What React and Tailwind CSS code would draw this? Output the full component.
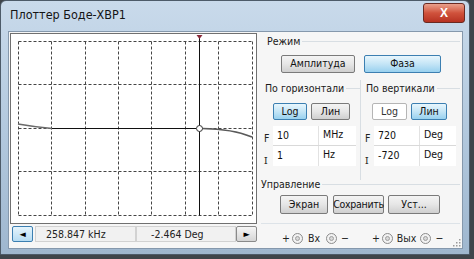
const font = { fontFamily: '"Liberation Sans Narrow", "DejaVu Sans Condensed", "Liberation Sans", sans-serif' };

const GridPlot = () => {
  const xs = [7.5, 40.5, 74.5, 107.5, 140.5, 174.5, 207.5, 241.5];
  const ys = [7.5, 50.5, 94.5, 137.5, 181.5];
  return (
    <svg width="245" height="189" viewBox="0 0 245 189">
      {xs.map((x) => (
        <line key={"x" + x} x1={x} y1="7.5" x2={x} y2="181.5" stroke="#444" strokeWidth="1" strokeDasharray="3 2" />
      ))}
      {ys.map((y) => (
        <line key={"y" + y} x1="7.5" y1={y} x2="241.5" y2={y} stroke="#444" strokeWidth="1" strokeDasharray="3 2" />
      ))}
      <path d="M7 90 Q24 93 41 94.5" fill="none" stroke="#6a6a6a" strokeWidth="1.6" />
      <line x1="41" y1="94.5" x2="185" y2="94.5" stroke="#111" strokeWidth="1" />
      <path d="M191 94.5 Q222 95 241 103" fill="none" stroke="#5a5a5a" strokeWidth="1.6" />
      <line x1="188.5" y1="3" x2="188.5" y2="181.5" stroke="#111" strokeWidth="1" />
      <path d="M185.5 1 L191.5 1 L188.5 5 Z" fill="#8a2a3a" />
      <circle cx="188.5" cy="94.5" r="3" fill="#fff" stroke="#333" strokeWidth="1" />
    </svg>
  );
};

const Btn = ({ children, active, className = "" }) => (
  <div
    className={
      "flex items-center justify-center rounded-[2px] border text-[10.5px] text-[#111] " +
      (active
        ? "border-[#3c7fb1] bg-gradient-to-b from-[#e8f6fd] via-[#c4e5f6] to-[#98d1ef] "
        : "border-[#7a7a7a] bg-gradient-to-b from-[#f4f4f4] via-[#e6e6e6] to-[#cfcfcf] ") +
      className
    }
  >
    {children}
  </div>
);

const WhiteBtn = ({ children, className = "" }) => (
  <div className={"flex items-center justify-center rounded-[2px] border border-[#b5b5b5] bg-white text-[10.5px] text-[#333] " + className}>
    {children}
  </div>
);

const GroupLabel = ({ children, className = "" }) => (
  <div className={"flex items-center h-[12px] " + className}>
    <span className="text-[10.5px] text-[#1a1a1a] leading-none pr-[2px]">{children}</span>
    <div className="flex-1 h-px bg-[#d8dee3]" />
  </div>
);

const Terminal = () => (
  <div className="w-[11px] h-[11px] rounded-full border border-[#8c8c8c] bg-[#f2f2f2] flex items-center justify-center">
    <div className="w-[5px] h-[5px] rounded-full border border-[#a0a0a0] bg-[#d8d8d8]" />
  </div>
);

const InputTable = ({ rows }) => (
  <div className="flex flex-col">
    {rows.map((r, i) => (
      <div key={i} className="flex h-[20px]">
        <div className={"w-[9px] text-[10.5px] text-[#222] " + (i === 0 ? "pt-[5px]" : "pt-[8px] font-serif")}>{r[0]}</div>
        <div className={"flex bg-white " + (i === 0 ? "border-b border-[#d9d9d9]" : "")}>
          <div className={"h-full text-[10.5px] text-[#111] pl-[4px] pt-[2px] border-r border-[#e2e2e2] " + r[3]}>{r[1]}</div>
          <div className={"h-full text-[10.5px] text-[#111] pl-[4px] pt-[1px] " + r[4]}>{r[2]}</div>
        </div>
      </div>
    ))}
  </div>
);

export default function App() {
  return (
    <div className="w-[474px] h-[259px] bg-[#3f454b] overflow-hidden" style={font}>
      <div className="w-[470px] h-[255px] rounded-t-[6px] border border-[#4d5b69] bg-gradient-to-b from-[#c9daeb] via-[#b3c9de] to-[#9fb7cf] flex flex-col px-[7px]">
        <div className="h-[30px] flex items-start justify-between">
          <span className="pt-[8px] pl-[2px] text-[12.5px] text-[#141414] leading-none">Плоттер Боде-XBP1</span>
          <div className="mt-[2px] mr-[-3px] w-[42px] h-[20px] rounded-[3px] border border-[#6a2a22] bg-gradient-to-b from-[#e9a08c] via-[#d0523c] to-[#b73222] flex items-center justify-center">
            <span className="text-white text-[12px] font-bold leading-none" style={{ fontFamily: '"Liberation Sans", sans-serif' }}>X</span>
          </div>
        </div>

        <div className="w-[455px] h-[218px] bg-[#f6f6f6] border border-[#8598ac] flex relative">
          {/* left column */}
          <div className="w-[248px] pl-[1px] pt-[1px] flex flex-col">
            <div className="w-[247px] h-[191px] border border-[#707070] bg-white">
              <GridPlot />
            </div>
            <div className="flex h-[17px] mt-[2px] ml-[2px]">
              <div className="w-[21px] h-[16px] rounded-[2px] border border-[#3c7fb1] bg-gradient-to-b from-[#e5f4fc] to-[#b6dcf3] flex items-center justify-center">
                <span className="text-[9px] text-black leading-none">&#9668;</span>
              </div>
              <div className="w-[101px] h-[16px] ml-[2px] border border-[#d2d2d2] bg-[#f1f1f1] text-[10.5px] text-[#222] pl-[10px] leading-[14px]">258.847 kHz</div>
              <div className="w-[100px] h-[16px] border border-[#d2d2d2] bg-[#f1f1f1] text-[10.5px] text-[#222] pl-[14px] leading-[14px]">-2.464 Deg</div>
              <div className="w-[21px] h-[16px] rounded-[2px] border border-[#8a8a8a] bg-gradient-to-b from-[#f6f6f6] to-[#d5d5d5] flex items-center justify-center">
                <span className="text-[9px] text-black leading-none">&#9658;</span>
              </div>
            </div>
          </div>

          {/* right column */}
          <div className="flex-1 flex flex-col pl-[4px]">
            <GroupLabel className="mt-[3px] ml-[6px] mr-[2px]">Режим</GroupLabel>
            <div className="flex mt-[8px] ml-[20px] gap-[9px]">
              <Btn className="w-[74px] h-[18px]">Амплитуда</Btn>
              <Btn active className="w-[77px] h-[18px]">Фаза</Btn>
            </div>

            <div className="flex mt-[7px] h-[100px]">
              <div className="w-[100px] flex flex-col border-r border-[#d8dee3]">
                <GroupLabel className="mt-[2px] ml-[4px]">По горизонтали</GroupLabel>
                <div className="flex mt-[9px] ml-[12px] gap-[4px]">
                  <Btn active className="w-[34px] h-[17px]">Log</Btn>
                  <Btn className="w-[39px] h-[17px]">Лин</Btn>
                </div>
                <div className="mt-[6px] ml-[3px]">
                  <InputTable rows={[["F", "10", "MHz", "w-[46px]", "w-[37px]"], ["I", "1", "Hz", "w-[46px]", "w-[37px]"]]} />
                </div>
              </div>
              <div className="flex-1 flex flex-col">
                <GroupLabel className="mt-[2px] ml-[5px] mr-[2px]">По вертикали</GroupLabel>
                <div className="flex mt-[9px] ml-[11px] gap-[4px]">
                  <WhiteBtn className="w-[35px] h-[17px]">Log</WhiteBtn>
                  <Btn active className="w-[36px] h-[17px]">Лин</Btn>
                </div>
                <div className="mt-[6px] ml-[4px]">
                  <InputTable rows={[["F", "720", "Deg", "w-[46px]", "w-[36px]"], ["I", "-720", "Deg", "w-[46px]", "w-[36px]"]]} />
                </div>
              </div>
            </div>

            <GroupLabel className="mt-[-2px] ml-[0px] mr-[2px]">Управление</GroupLabel>
            <div className="flex mt-[5px] ml-[19px]">
              <Btn className="w-[48px] h-[19px]">Экран</Btn>
              <Btn className="w-[51px] h-[19px] ml-[5px] tracking-[-0.3px]">Сохранить</Btn>
              <Btn className="w-[52px] h-[19px] ml-[4px]">Уст...</Btn>
            </div>

            <div className="h-px bg-[#dde3e8] mt-[9px] mr-[2px]" />
            <div className="flex items-center mt-[7px] text-[10.5px] text-[#222]">
              <span className="ml-[21px]">+</span>
              <div className="ml-[2px]"><Terminal /></div>
              <span className="ml-[5px]">Bx</span>
              <div className="ml-[6px]"><Terminal /></div>
              <span className="ml-[4px]">−</span>
              <span className="ml-[23px]">+</span>
              <div className="ml-[2px]"><Terminal /></div>
              <span className="ml-[4px]">Вых</span>
              <div className="ml-[4px]"><Terminal /></div>
              <span className="ml-[4px]">−</span>
            </div>
          </div>

          <svg className="absolute right-[1px] bottom-[1px]" width="8" height="8" viewBox="0 0 8 8">
            <rect x="6" y="0" width="1.5" height="1.5" fill="#9a9a9a" />
            <rect x="3" y="3" width="1.5" height="1.5" fill="#9a9a9a" />
            <rect x="6" y="3" width="1.5" height="1.5" fill="#9a9a9a" />
            <rect x="0" y="6" width="1.5" height="1.5" fill="#9a9a9a" />
            <rect x="3" y="6" width="1.5" height="1.5" fill="#9a9a9a" />
            <rect x="6" y="6" width="1.5" height="1.5" fill="#9a9a9a" />
          </svg>
        </div>
      </div>
    </div>
  );
}
